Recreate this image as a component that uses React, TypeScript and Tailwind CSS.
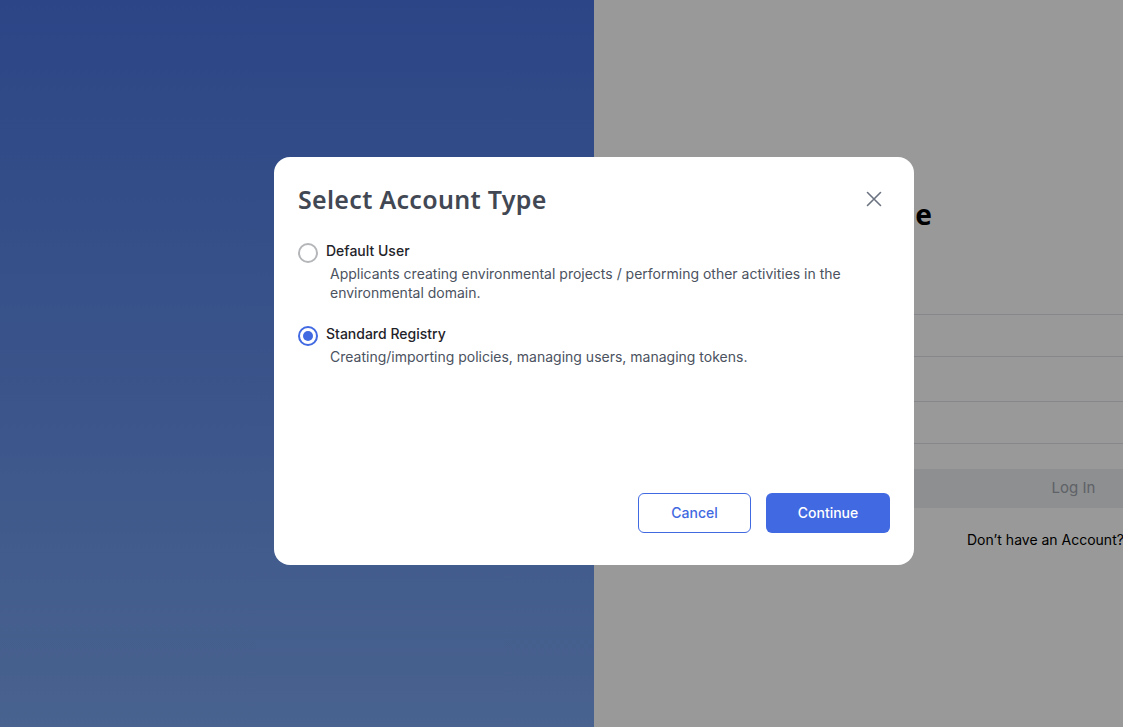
import { useState } from "react";

const options = [
  {
    id: "user",
    label: "Default User",
    desc: "Applicants creating environmental projects / performing other activities in the environmental domain.",
  },
  {
    id: "registry",
    label: "Standard Registry",
    desc: "Creating/importing policies, managing users, managing tokens.",
  },
];

function LoginPage() {
  return (
    <div className="flex h-[727px] w-full overflow-hidden">
      <div className="w-[594px] shrink-0 bg-gradient-to-b from-[#4a74e0] to-[#7aa4ee]" />
      <div className="flex-1 overflow-hidden bg-white">
        <div className="ml-[206px] w-[547px] pt-[196px] font-['Inter',sans-serif]">
          <div className="flex w-[132px] justify-end">
            <h1 className="whitespace-nowrap font-['Noto_Sans',sans-serif] text-[28px] font-bold leading-[36px] text-black">
              Welcome
            </h1>
          </div>
          <div className="mt-[54px] text-sm text-[#374151]">Username</div>
          <div className="mt-[8px] h-[43px] rounded border border-[#e0e2e6]" />
          <div className="mt-[16px] text-sm text-[#374151]">Password</div>
          <div className="mt-[8px] h-[43px] rounded border border-[#e0e2e6]" />
          <div className="mt-[25px] flex h-[39px] items-center justify-center rounded bg-[#eceef2] text-[15px] text-[#9ea3ab]">
            Log In
          </div>
          <div className="mt-[22px] text-center text-sm text-black">
            Don’t have an Account? <span className="text-[#4169e1]">Sign Up</span>
          </div>
        </div>
      </div>
    </div>
  );
}

function Radio({ checked }: { checked: boolean }) {
  return (
    <span
      className={
        checked
          ? "flex h-5 w-5 shrink-0 items-center justify-center rounded-full border-2 border-[#4169e1]"
          : "flex h-5 w-5 shrink-0 items-center justify-center rounded-full border-2 border-[#b4b6b9]"
      }
    >
      {checked && <span className="h-[10px] w-[10px] rounded-full bg-[#4169e1]" />}
    </span>
  );
}

export default function App() {
  const [selected, setSelected] = useState("registry");

  return (
    <div className="relative h-[727px] w-full overflow-hidden">
      <LoginPage />
      <div className="fixed inset-0 flex items-center justify-center bg-black/40 pb-[6px] pl-[65px]">
        <div className="flex h-[408px] w-[640px] flex-col rounded-2xl bg-white px-6 pb-8 pt-6 font-['Inter',sans-serif]">
          <div className="flex items-center justify-between">
            <h2 className="font-['Noto_Sans',sans-serif] text-[25px] font-semibold leading-9 tracking-[0.3px] text-[#424853]">
              Select Account Type
            </h2>
            <button className="mr-[8px] text-[#6b7280]">
              <svg width="16" height="16" viewBox="0 0 16 16" fill="none" stroke="currentColor" strokeWidth="1.6" strokeLinecap="round">
                <path d="M1.5 1.5l13 13M14.5 1.5l-13 13" />
              </svg>
            </button>
          </div>

          <div className="mt-[22px] flex flex-col gap-[20px]">
            {options.map((o) => (
              <div key={o.id} className="cursor-pointer" onClick={() => setSelected(o.id)}>
                <div className="flex items-center gap-2">
                  <span className="mt-1">
                    <Radio checked={selected === o.id} />
                  </span>
                  <span className="text-sm font-medium leading-5 text-[#1f2329]">{o.label}</span>
                </div>
                <p className="mt-[1px] pl-8 pr-6 text-sm leading-[19px] text-[#4b5260]">{o.desc}</p>
              </div>
            ))}
          </div>

          <div className="mt-auto flex justify-end gap-[15px]">
            <button className="h-10 w-[113px] rounded-md border border-[#4169e1] text-sm font-medium text-[#4169e1]">
              Cancel
            </button>
            <button className="h-10 w-[124px] rounded-md bg-[#4169e1] text-sm font-medium text-white">
              Continue
            </button>
          </div>
        </div>
      </div>
    </div>
  );
}
